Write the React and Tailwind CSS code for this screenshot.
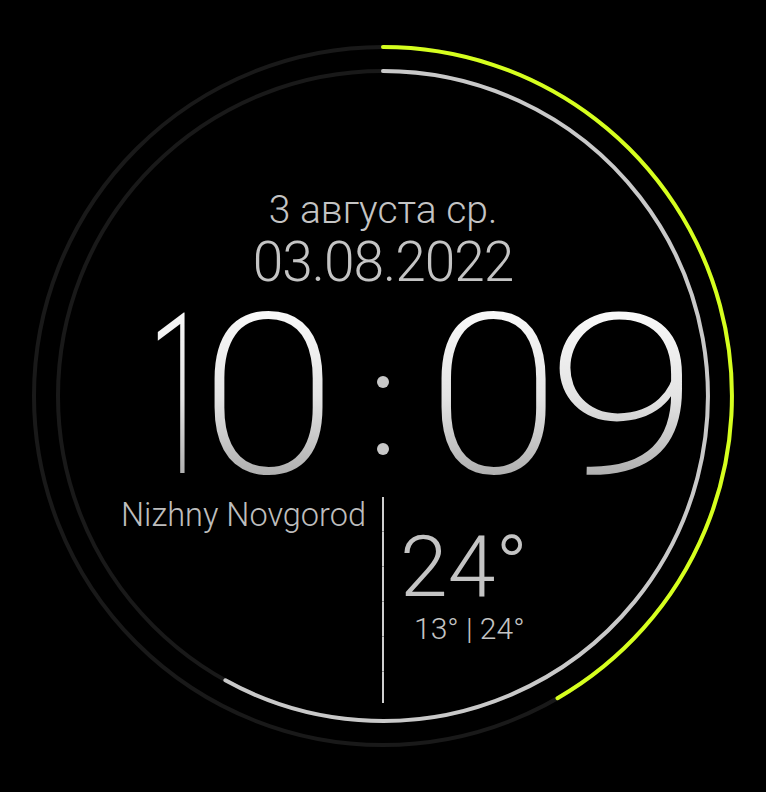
import React from 'react';

const CX = 383;
const CY = 396;

// point on a ring, angle in degrees clockwise from 12 o'clock
const polar = (r, deg) => {
  const a = (deg * Math.PI) / 180;
  return [CX + r * Math.sin(a), CY - r * Math.cos(a)];
};

const arc = (r, deg) => {
  const [x, y] = polar(r, deg);
  return `M ${CX} ${CY - r} A ${r} ${r} 0 ${deg > 180 ? 1 : 0} 1 ${x.toFixed(1)} ${y.toFixed(1)}`;
};

const Rings = () => (
  <svg className="absolute inset-0" width="766" height="792" viewBox="0 0 766 792">
    <circle cx={CX} cy={CY} r="349" fill="none" stroke="#191919" strokeWidth="4" />
    <circle cx={CX} cy={CY} r="325" fill="none" stroke="#191919" strokeWidth="4" />
    <path d={arc(349, 150)} fill="none" stroke="#d6ff1e" strokeWidth="4" strokeLinecap="round" />
    <path d={arc(325, 209)} fill="none" stroke="#c9c9c9" strokeWidth="4" strokeLinecap="round" />
  </svg>
);

const Digit = ({ value, box, stretch }) => (
  <div className={`${box} text-center`}>
    <span className={`inline-block ${stretch} bg-gradient-to-b from-white via-[#e4e4e4] to-[#9a9a9a] bg-clip-text text-transparent`}>
      {value}
    </span>
  </div>
);

export default function App() {
  return (
    <div className="relative w-[766px] h-[792px] overflow-hidden bg-black font-['Roboto',sans-serif] text-[#c4c4c4]">
      <Rings />

      <div className="relative flex flex-col items-center pt-[186px]">
        <div className="text-[39px] font-light leading-[48px]">3 августа ср.</div>
        <div className="text-[55px] font-light leading-[56px] tracking-[-1px]">03.08.2022</div>

        <div className="flex items-start w-full h-[200px] -mt-[5px] pl-[150px] text-[224px] font-extralight leading-none">
          <Digit value="1" box="w-[48px]" stretch="scale-x-[0.5] -translate-x-[33px]" />
          <Digit value="0" box="w-[141px]" stretch="scale-x-[1.12]" />
          <div className="flex flex-col items-center gap-[55px] w-[88px] pt-[91px]">
            <span className="block w-[12px] h-[12px] rounded-full bg-[#c8c8c8]" />
            <span className="block w-[12px] h-[12px] rounded-full bg-[#c8c8c8]" />
          </div>
          <Digit value="0" box="w-[134px]" stretch="scale-x-[1.08]" />
          <Digit value="9" box="w-[128px]" stretch="scale-x-[1.25] -translate-x-[2px]" />
        </div>

        <div className="grid grid-cols-[1fr_2px_1fr] w-full mt-[12px]">
          <div className="pr-[16px] text-right text-[32.5px] font-light leading-[36px] text-[#bdbdbd]">
            Nizhny Novgorod
          </div>
          <div className="flex flex-col h-[206px]">
            <div className="h-[34px] bg-[#cfcfcf]" />
            <div className="h-[1px] bg-[#8a8a8a]" />
            <div className="h-[34px] bg-[#cfcfcf]" />
            <div className="h-[1px] bg-[#8a8a8a]" />
            <div className="h-[34px] bg-[#cfcfcf]" />
            <div className="h-[1px] bg-[#8a8a8a]" />
            <div className="h-[34px] bg-[#cfcfcf]" />
            <div className="h-[1px] bg-[#8a8a8a]" />
            <div className="h-[34px] bg-[#cfcfcf]" />
            <div className="h-[1px] bg-[#8a8a8a]" />
            <div className="flex-1 bg-[#cfcfcf]" />
          </div>
          <div className="pl-[16px] flex flex-col items-start">
            <div className="mt-[30px] text-[86px] font-light leading-[80px]">24°</div>
            <div className="ml-[14px] mt-[6px] text-[30px] font-light leading-[32px]">13° | 24°</div>
          </div>
        </div>
      </div>
    </div>
  );
}
